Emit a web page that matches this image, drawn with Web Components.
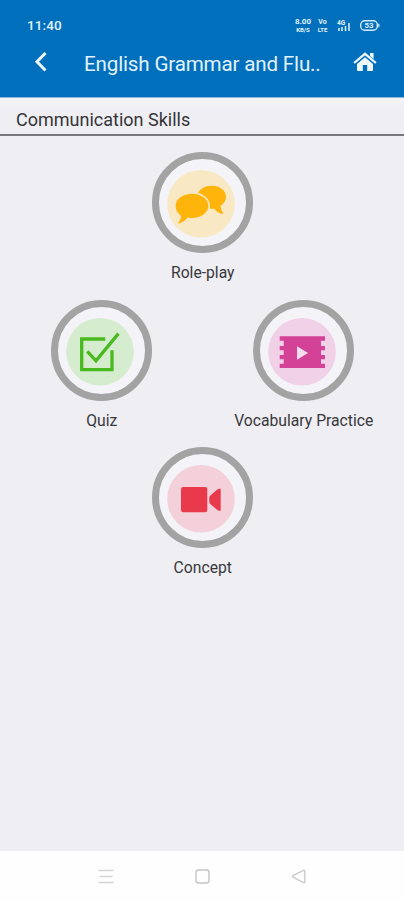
<!DOCTYPE html>
<html lang="en"><head><meta charset="utf-8"><title>Communication Skills</title>
<style>html,body{margin:0;height:100%;background:#eeeef3}body{font-family:Roboto,"Liberation Sans",sans-serif}</style></head>
<body><skills-screen></skills-screen>
<script>
const define=(name,html)=>customElements.define(name,class extends HTMLElement{
  constructor(){super();const t=document.createElement('template');t.innerHTML=html;
    this.attachShadow({mode:'open'}).append(t.content.cloneNode(true));}
});
define('status-bar',`<style>
:host{display:flex;height:34px;padding:17px 24px 0 27px;box-sizing:border-box;justify-content:space-between;color:#e3f2fc}
.time{font-size:13.5px;line-height:16px;font-weight:500;letter-spacing:.1px}
.icons{display:flex;align-items:flex-start;padding-top:1px}
.st{display:flex;flex-direction:column;align-items:center;font-size:8px;line-height:8px;font-weight:700;white-space:nowrap}
.st small{font-size:6px;line-height:7px}
.net{width:18px;margin-right:5px}.vo{width:11px;margin-right:9px;font-size:7px}
svg{display:block;margin-top:1px}.sig{margin-right:9px}
</style><span class="time">11:40</span><div class="icons">
<div class="st net"><span>8.00</span><small>KB/S</small></div><div class="st vo"><span>Vo</span><small>LTE</small></div>
<svg class="sig" width="14" height="13" viewBox="0 0 14 13"><text x="0" y="6" font-size="6.5" font-weight="700" fill="#e3f2fc">4G</text><path d="M2 9v3M5 8v4M8.500 7v5M12 4v8" stroke="#e3f2fc" stroke-width="1.500"/></svg>
<svg width="20" height="13" viewBox="0 0 20 13"><rect x=".7" y="1.700" width="16.600" height="9.600" rx="4" fill="none" stroke="#d4eafa" stroke-width="1.400"/><path d="M18.800 4.700v3.500" stroke="#d4eafa" stroke-width="1.200"/><text x="4.600" y="9.300" font-size="7.800" font-weight="700" fill="#e3f2fc">53</text></svg>
</div>`);
define('app-bar',`<style>
:host{display:flex;height:63px;padding:0 27px 0 34px;box-sizing:border-box;color:#e3f2fc}
.back{margin:17px 36px 0 0}.title{flex:1;font-size:20.6px;line-height:26px;margin-top:17px;white-space:nowrap;letter-spacing:-.17px}
.home{margin-top:17px}svg{flex:none}
</style><svg class="back" width="14" height="22" viewBox="0 0 14 22"><path d="M11.500 2 3 10.800l8.500 8.700" fill="none" stroke="#eef8ff" stroke-width="3"/></svg>
<span class="title"><slot></slot></span>
<svg class="home" width="24" height="21" viewBox="0 0 24 21" fill="#f0f8fe"><path d="M17 2h3.600v6l-3.600-3zM12 6.200l8 6.700v6q0 1-1 1h-4.800v-6H9.800v6H5q-1 0-1-1v-6z"/><path d="m1.100 12 10.900-9.200L22.900 12" fill="none" stroke="#f0f8fe" stroke-width="2.200"/></svg>`);
define('section-heading',`<style>
:host{display:block;height:39px;box-sizing:border-box;border-top:1px solid #8bb9dd;border-bottom:2px solid #77777b;padding:10px 0 0 16px;font-size:18px;line-height:24px;color:#353538;background:linear-gradient(#f5f3f4,#eeeef3 14px)}
</style><slot></slot>`);
define('skill-tile',`<style>
:host{display:flex;flex-direction:column;align-items:center;width:202px;height:147.500px}
.ring{width:101px;height:101px;box-sizing:border-box;border:7px solid #a3a3a4;border-radius:50%;background:#f4f3f8}
::slotted(svg){display:block;margin:-7px;width:101px;height:101px}
.label{font-size:15.7px;line-height:22px;margin-top:9px;padding-left:1.500px;color:#38383b;white-space:nowrap}
</style><div class="ring"><slot name="icon"></slot></div><span class="label"><slot></slot></span>`);
define('nav-bar',`<style>
:host{display:flex;height:49px;background:#fefefe;padding:0 97px;box-sizing:border-box;align-items:center;justify-content:space-between}
</style>
<svg width="17" height="18" viewBox="0 0 17 18"><path d="M1.500 3.500h15M2.500 9.500h13M1.500 15.500h15" stroke="#d5d5d5" stroke-width="1.700"/></svg>
<svg width="17" height="18" viewBox="0 0 17 18"><rect x="2" y="3" width="13" height="13" rx="2.500" fill="none" stroke="#c5c5c5" stroke-width="1.400"/></svg>
<svg width="17" height="18" viewBox="0 0 17 18"><path d="M13.500 3.300 3 8.700q-1 .7 0 1.400l10.500 5.500q1.300.5 1.300-1V4.300q0-1.400-1.300-1z" fill="none" stroke="#cbcbcb" stroke-width="1.400"/></svg>`);
define('skills-screen',`<style>
:host{display:flex;flex-direction:column;width:404px;height:900px;background:#eeeef3}
header{background:#0070bd;height:97px}
main{flex:1;padding-top:16px;display:flex;flex-direction:column;align-items:center}
.row{display:flex}
</style>
<header><status-bar></status-bar><app-bar>English Grammar and Flu..</app-bar></header>
<section-heading>Communication Skills</section-heading>
<main>
<skill-tile><svg slot="icon" viewBox="0 0 101 101"><circle cx="49" cy="51.800" r="33.800" fill="#f8e8c3"/>
<path d="M59.700 33.700c8 0 14.300 4.800 14.300 11 0 3.800-2.200 7-5.300 9 0 3 1 5.800 3 8.300-4.500-.5-7.500-2.500-9.500-5.300-9 .8-17-4-17-12 0-6.200 6.400-11 14.500-11z" fill="#ffb40b"/>
<path d="M40 41.700c9 0 16.400 5.300 16.400 12.100S49 66 40 66q-2.300 0-4.300-.5c-2.700 3.300-6 5.500-10.200 6.300 2.300-2.400 3.500-5 3.500-8-3.400-2.200-5.400-5.800-5.400-10 0-6.800 7.400-12.100 16.400-12.100z" fill="#ffb40b" stroke="#f8e8c3" stroke-width="3.200" paint-order="stroke"/></svg>Role-play</skill-tile>
<div class="row">
<skill-tile><svg slot="icon" viewBox="0 0 101 101"><circle cx="49" cy="51.800" r="33.800" fill="#d5eccf"/><path d="M54.300 39H30.700v30.600H61V50.300M36.300 51.300l8.700 9.500 22.400-27.200" fill="none" stroke="#48b91f" stroke-width="3.300"/></svg>Quiz</skill-tile>
<skill-tile><svg slot="icon" viewBox="0 0 101 101"><circle cx="49" cy="51.800" r="33.800" fill="#f0d1e7"/><path d="M26.700 36.300H72v4.400h-4V46h4v4.300h-4V55h4v4.300h-4v4.400h4V68H26.700v-4.300h4v-4.400h-4V55h4v-4.700h-4V46h4v-5.300h-4z" fill="#d44297"/><path d="M44 46.300v13.400L55 53z" fill="#f5ddee"/></svg>Vocabulary Practice</skill-tile>
</div>
<skill-tile><svg slot="icon" viewBox="0 0 101 101"><circle cx="49" cy="51.800" r="33.800" fill="#f4d1da"/><rect x="29" y="40" width="26.300" height="25.300" rx="2.200" fill="#e93a4c"/><path d="M57.300 50.500v4.500q0 1 .8 1.700l7.200 6.200q1 .8 2 .8h1.400v-22H67.300q-1 0-2 .8l-7.200 6.300q-.8.700-.8 1.700z" fill="#e93a4c"/></svg>Concept</skill-tile>
</main><nav-bar></nav-bar>`);
</script></body></html>
